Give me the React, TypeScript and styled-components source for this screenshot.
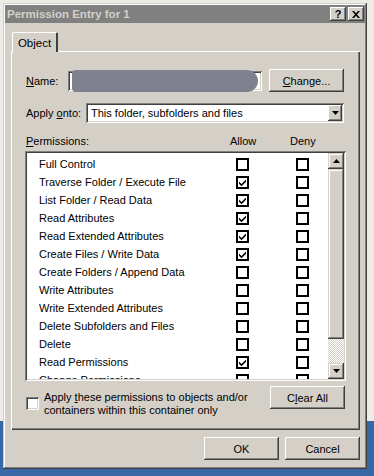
import styled, { createGlobalStyle } from "styled-components";

const GlobalStyle = createGlobalStyle`
  html, body { margin: 0; padding: 0; }
  body {
    font-family: "Liberation Sans", Arial, sans-serif;
    font-size: 11px;
    color: #000;
  }
`;

const FACE = "#d4d0c8";

type Perm = { name: string; allow: boolean };

const perms: Perm[] = [
  { name: "Full Control", allow: false },
  { name: "Traverse Folder / Execute File", allow: true },
  { name: "List Folder / Read Data", allow: true },
  { name: "Read Attributes", allow: true },
  { name: "Read Extended Attributes", allow: true },
  { name: "Create Files / Write Data", allow: true },
  { name: "Create Folders / Append Data", allow: false },
  { name: "Write Attributes", allow: false },
  { name: "Write Extended Attributes", allow: false },
  { name: "Delete Subfolders and Files", allow: false },
  { name: "Delete", allow: false },
  { name: "Read Permissions", allow: true },
  { name: "Change Permissions", allow: false },
  { name: "Take Ownership", allow: false },
];

const CheckMark = () => (
  <svg width="9" height="9" viewBox="0 0 9 9">
    <path d="M1 3.5 L3.5 6 L8 1.5 L8 3.8 L3.5 8.2 L1 5.8 Z" fill="#000" />
  </svg>
);

const Arrow = ({ up }: { up?: boolean }) => (
  <svg width="7" height="4" viewBox="0 0 7 4">
    <path d={up ? "M3.5 0 L7 4 L0 4 Z" : "M0 0 L7 0 L3.5 4 Z"} fill="#000" />
  </svg>
);

const CloseGlyph = () => (
  <svg width="8" height="7" viewBox="0 0 8 7">
    <path
      d="M0 0 H2 L4 2.2 L6 0 H8 L5 3.5 L8 7 H6 L4 4.8 L2 7 H0 L3 3.5 Z"
      fill="#000"
    />
  </svg>
);

export default function App() {
  return (
    <>
      <GlobalStyle />
      <Screen>
        <Window>
          <TitleBar>
            <Title>Permission Entry for 1</Title>
            <TitleButtons>
              <CaptionButton>?</CaptionButton>
              <CaptionButton>
                <CloseGlyph />
              </CaptionButton>
            </TitleButtons>
          </TitleBar>
          <Body>
            <Tabs>
              <Tab>Object</Tab>
            </Tabs>
            <Panel>
              <NameRow>
                <Label $width={42}>
                  <u>N</u>ame:
                </Label>
                <NameField>
                  <Redacted />
                </NameField>
                <Button>
                  <u>C</u>hange...
                </Button>
              </NameRow>
              <ApplyRow>
                <Label $width={60}>
                  Apply <u>o</u>nto:
                </Label>
                <Combo>
                  <ComboText>This folder, subfolders and files</ComboText>
                  <DropButton>
                    <Arrow />
                  </DropButton>
                </Combo>
              </ApplyRow>
              <HeaderRow>
                <span>
                  <u>P</u>ermissions:
                </span>
                <span>Allow</span>
                <span>Deny</span>
              </HeaderRow>
              <ListBox>
                <Rows>
                  {perms.map((p) => (
                    <PermRow key={p.name}>
                      <span>{p.name}</span>
                      <FlatBox>{p.allow && <CheckMark />}</FlatBox>
                      <FlatBox />
                    </PermRow>
                  ))}
                </Rows>
                <ScrollBar>
                  <ScrollButton>
                    <Arrow up />
                  </ScrollButton>
                  <Thumb />
                  <Track />
                  <ScrollButton>
                    <Arrow />
                  </ScrollButton>
                </ScrollBar>
              </ListBox>
              <BottomRow>
                <ApplyCheck>
                  <SunkenBox />
                  <ApplyText>
                    Apply <u>t</u>hese permissions to objects and/or
                    <br />
                    containers within this container only
                  </ApplyText>
                </ApplyCheck>
                <Button>
                  C<u>l</u>ear All
                </Button>
              </BottomRow>
            </Panel>
            <Footer>
              <Button>OK</Button>
              <Button>Cancel</Button>
            </Footer>
          </Body>
        </Window>
      </Screen>
    </>
  );
}

const Screen = styled.div`
  width: 374px;
  height: 476px;
  overflow: hidden;
  box-sizing: border-box;
  padding: 3px 0 0 3px;
  background: linear-gradient(
    to bottom,
    #ecebe6 0,
    #ecebe6 421px,
    #3767a6 421px
  );
`;

const Window = styled.div`
  width: 364px;
  height: 466px;
  box-sizing: border-box;
  padding: 2px;
  background: ${FACE};
  box-shadow: inset -1px -1px #404040, inset 1px 1px ${FACE},
    inset -2px -2px #808080, inset 2px 2px #ffffff;
  display: flex;
  flex-direction: column;
`;

const TitleBar = styled.div`
  height: 18px;
  background: #808080;
  display: flex;
  align-items: center;
  justify-content: space-between;
  padding: 0 1px 0 2px;
`;

const Title = styled.span`
  color: ${FACE};
  font-weight: bold;
  font-size: 11.5px;
`;

const TitleButtons = styled.div`
  display: flex;
  gap: 2px;
`;

const CaptionButton = styled.div`
  width: 16px;
  height: 14px;
  box-sizing: border-box;
  background: ${FACE};
  box-shadow: inset -1px -1px #404040, inset 1px 1px #ffffff,
    inset -2px -2px #808080;
  display: flex;
  align-items: center;
  justify-content: center;
  font-weight: bold;
  font-size: 11px;
  line-height: 1;
`;

const Body = styled.div`
  flex: 1;
  display: flex;
  flex-direction: column;
  padding: 9px 5px 0 6px;
`;

const Tabs = styled.div`
  display: flex;
  padding-left: 1px;
  position: relative;
  z-index: 1;
  margin-bottom: -1px;
`;

const Tab = styled.div`
  width: 46px;
  height: 20px;
  box-sizing: border-box;
  background: ${FACE};
  border-top: 1px solid #fff;
  border-left: 1px solid #fff;
  border-right: 2px solid #404040;
  border-top-left-radius: 2px;
  border-top-right-radius: 2px;
  display: flex;
  align-items: center;
  justify-content: center;
  font-size: 11.5px;
`;

const Panel = styled.div`
  height: 379px;
  box-sizing: border-box;
  padding: 18px 15px 0 15px;
  box-shadow: inset 1px 1px #ffffff, inset -1px -1px #404040,
    inset -2px -2px #808080;
  display: flex;
  flex-direction: column;
`;

const Label = styled.span<{ $width: number }>`
  width: ${(p) => p.$width}px;
  flex: none;
`;

const NameRow = styled.div`
  display: flex;
  align-items: center;
  height: 23px;
`;

const sunken = `
  box-shadow: inset 1px 1px #808080, inset -1px -1px #ffffff,
    inset 2px 2px #404040, inset -2px -2px ${FACE};
`;

const NameField = styled.div`
  width: 194px;
  height: 20px;
  box-sizing: border-box;
  background: #fff;
  ${sunken}
  margin-right: 7px;
  padding: 0 4px 0 4px;
  display: flex;
  align-items: stretch;
`;

const Redacted = styled.div`
  flex: 1;
  margin: -1px 0;
  background: #80818e;
  border-radius: 4px 11px 11px 4px;
`;

const Button = styled.div`
  width: 75px;
  height: 23px;
  box-sizing: border-box;
  background: ${FACE};
  box-shadow: inset -1px -1px #404040, inset 1px 1px #ffffff,
    inset -2px -2px #808080;
  display: flex;
  align-items: center;
  justify-content: center;
  flex: none;
`;

const ApplyRow = styled.div`
  display: flex;
  align-items: center;
  margin-top: 11px;
`;

const Combo = styled.div`
  width: 258px;
  height: 20px;
  box-sizing: border-box;
  background: #fff;
  ${sunken}
  padding: 2px;
  display: flex;
  align-items: center;
`;

const ComboText = styled.span`
  flex: 1;
  padding-left: 3px;
`;

const DropButton = styled.div`
  width: 14px;
  height: 16px;
  box-sizing: border-box;
  background: ${FACE};
  box-shadow: inset -1px -1px #404040, inset 1px 1px #ffffff,
    inset -2px -2px #808080;
  display: flex;
  align-items: center;
  justify-content: center;
`;

const HeaderRow = styled.div`
  margin-top: 12px;
  display: grid;
  grid-template-columns: 204px 60px auto;
  height: 13px;
  line-height: 13px;
`;

const ListBox = styled.div`
  margin: 3px -1px 0 -1px;
  height: 230px;
  box-sizing: border-box;
  padding: 2px;
  background: #fff;
  ${sunken}
  display: flex;
`;

const Rows = styled.div`
  flex: 1;
  overflow: hidden;
  padding: 2px 0 0 12px;
`;

const PermRow = styled.div`
  display: grid;
  grid-template-columns: 197px 60px auto;
  align-items: center;
  height: 18px;
  white-space: nowrap;
`;

const FlatBox = styled.div`
  width: 13px;
  height: 13px;
  box-sizing: border-box;
  border: 2px solid #000;
  background: #fff;
  display: flex;
  align-items: center;
  justify-content: center;
`;

const ScrollBar = styled.div`
  width: 16px;
  display: flex;
  flex-direction: column;
`;

const ScrollButton = styled.div`
  height: 16px;
  flex: none;
  background: ${FACE};
  box-shadow: inset -1px -1px #404040, inset 1px 1px ${FACE},
    inset -2px -2px #808080, inset 2px 2px #ffffff;
  display: flex;
  align-items: center;
  justify-content: center;
`;

const Thumb = styled.div`
  height: 170px;
  flex: none;
  background: ${FACE};
  box-shadow: inset -1px -1px #404040, inset 1px 1px ${FACE},
    inset -2px -2px #808080, inset 2px 2px #ffffff;
`;

const Track = styled.div`
  flex: 1;
  background: repeating-conic-gradient(#ffffff 0 25%, ${FACE} 0 50%) 0 0 /
    2px 2px;
`;

const BottomRow = styled.div`
  margin-top: 5px;
  display: flex;
  justify-content: space-between;
  align-items: flex-start;
`;

const ApplyCheck = styled.div`
  margin-top: 5px;
  display: flex;
  align-items: flex-start;
  gap: 5px;
`;

const SunkenBox = styled.div`
  width: 13px;
  height: 13px;
  margin-top: 6px;
  box-sizing: border-box;
  background: #fff;
  ${sunken}
  flex: none;
`;

const ApplyText = styled.div`
  line-height: 13px;
`;

const Footer = styled.div`
  margin-top: 7px;
  display: flex;
  justify-content: flex-end;
  gap: 6px;
`;
